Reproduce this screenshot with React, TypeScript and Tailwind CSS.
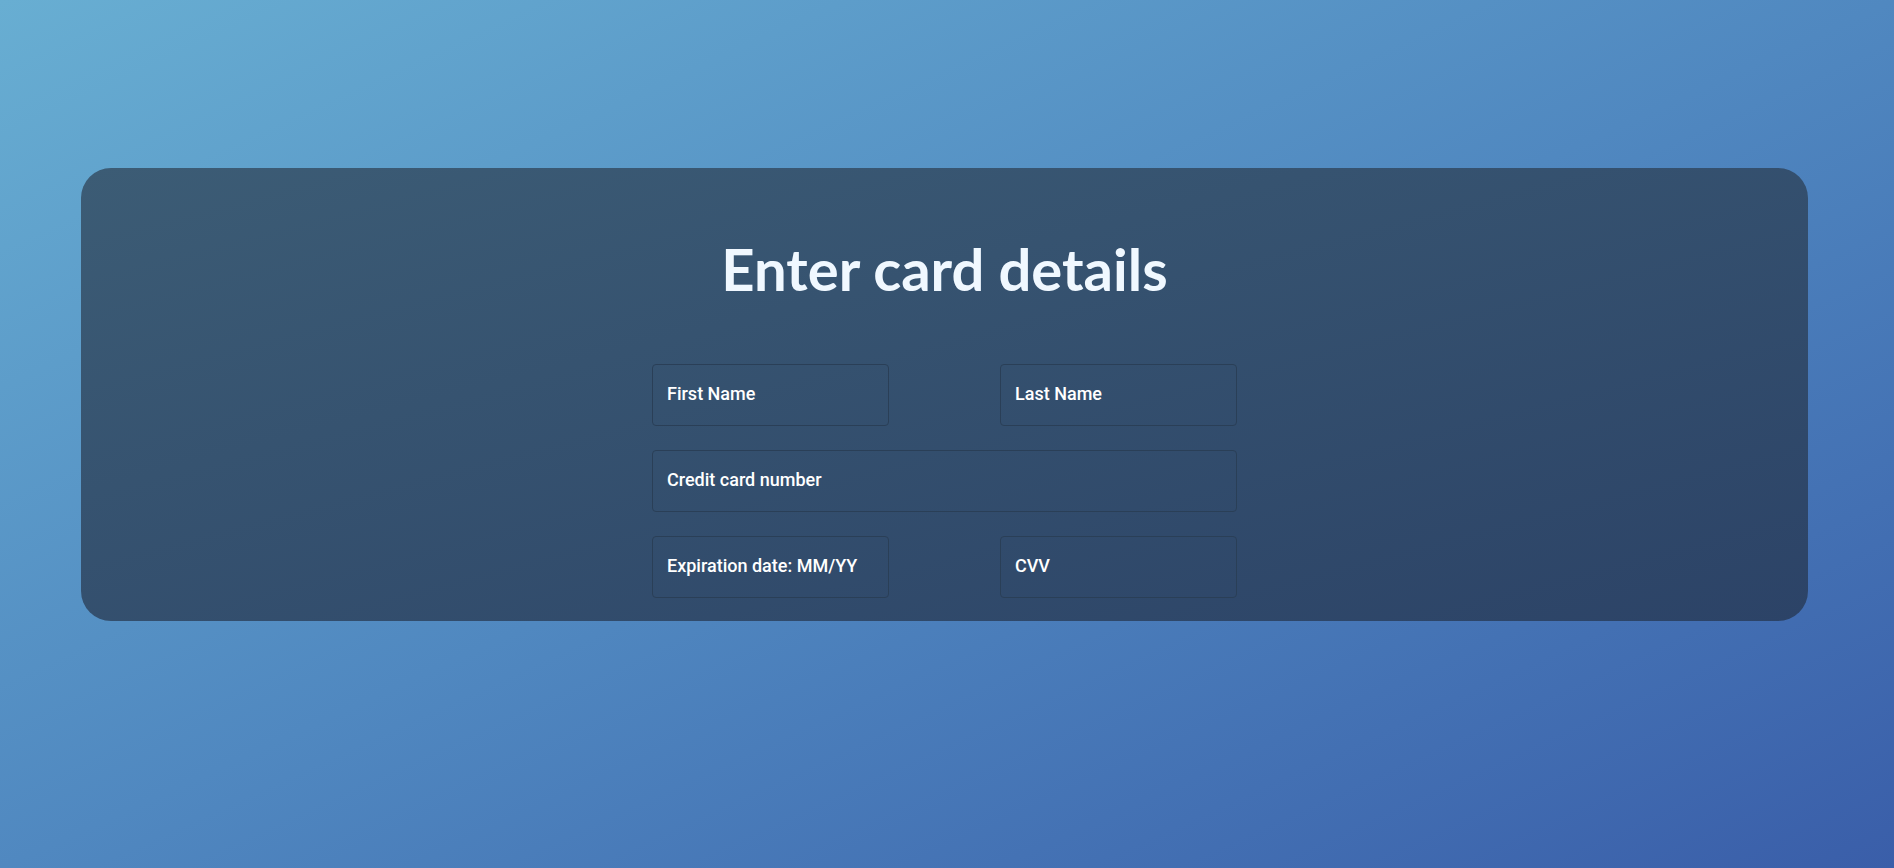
export default function App() {
  return (
    <div className="min-h-screen w-full bg-gradient-to-br from-[#68aed2] via-[#5088c0] to-[#3a5ea9] pl-[81px] pt-[168px]">
      <div className="flex h-[453px] w-[1727px] flex-col items-center rounded-[30px] bg-gradient-to-br from-[#3c5c75] to-[#2c4367] pt-[69px]">
        <h1
          className="text-[58px] font-bold leading-[64px] text-[#f0f8ff]"
          style={{ fontFamily: 'Lato, sans-serif' }}
        >
          Enter card details
        </h1>
        <form
          className="mt-[63px] grid w-[585px] grid-cols-[237px_237px] justify-between gap-y-6"
          style={{ fontFamily: 'Roboto, sans-serif' }}
        >
          <Field label="First Name" />
          <Field label="Last Name" />
          <div className="col-span-2">
            <Field label="Credit card number" />
          </div>
          <Field label="Expiration date: MM/YY" />
          <Field label="CVV" />
        </form>
      </div>
    </div>
  );
}

function Field({ label }: { label: string }) {
  return (
    <input
      placeholder={label}
      className="h-[62px] w-full rounded-[4px] border border-[#2a3f57] bg-transparent px-[14px] pb-[3px] text-[18px] font-medium text-white outline-none placeholder:text-white"
    />
  );
}
